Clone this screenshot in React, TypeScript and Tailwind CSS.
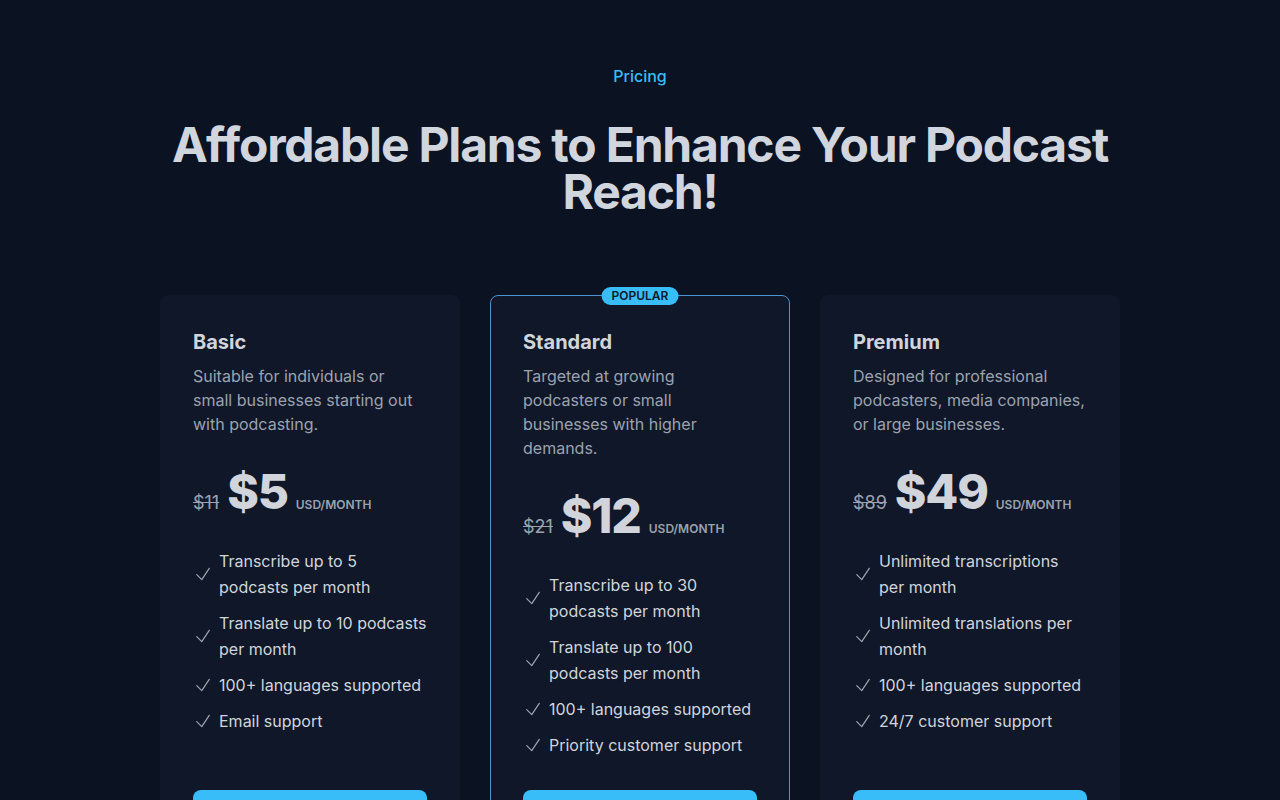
import React from "react";

interface Plan {
  name: string;
  description: string;
  oldPrice: string;
  price: string;
  features: string[];
  popular?: boolean;
}

const plans: Plan[] = [
  {
    name: "Basic",
    description:
      "Suitable for individuals or small businesses starting out with podcasting.",
    oldPrice: "$11",
    price: "$5",
    features: [
      "Transcribe up to 5 podcasts per month",
      "Translate up to 10 podcasts per month",
      "100+ languages supported",
      "Email support",
    ],
  },
  {
    name: "Standard",
    description:
      "Targeted at growing podcasters or small businesses with higher demands.",
    oldPrice: "$21",
    price: "$12",
    features: [
      "Transcribe up to 30 podcasts per month",
      "Translate up to 100 podcasts per month",
      "100+ languages supported",
      "Priority customer support",
    ],
    popular: true,
  },
  {
    name: "Premium",
    description:
      "Designed for professional podcasters, media companies, or large businesses.",
    oldPrice: "$89",
    price: "$49",
    features: [
      "Unlimited transcriptions per month",
      "Unlimited translations per month",
      "100+ languages supported",
      "24/7 customer support",
    ],
  },
];

function CheckIcon() {
  return (
    <svg
      viewBox="0 0 24 24"
      fill="none"
      stroke="currentColor"
      strokeWidth={1.5}
      className="h-5 w-5 shrink-0 text-[#9ca3af]"
    >
      <path strokeLinecap="round" strokeLinejoin="round" d="m4.5 12.75 6 6 9-13.5" />
    </svg>
  );
}

function PlanCard({ plan }: { plan: Plan }) {
  return (
    <div
      className={
        plan.popular
          ? "relative flex flex-col rounded-lg border border-[#4a95d2] bg-[#0f1729] p-8"
          : "relative flex flex-col rounded-lg border border-transparent bg-[#0f1729] p-8"
      }
    >
      {plan.popular && (
        <span className="absolute left-1/2 top-0 -translate-x-1/2 -translate-y-1/2 rounded-full bg-[#38bdf8] px-2.5 py-[1px] text-xs font-semibold text-[#0f172a]">
          POPULAR
        </span>
      )}
      <h3 className="text-xl font-bold text-[#d1d5db]">{plan.name}</h3>
      <p className="mt-2 text-base leading-6 text-[#9ca3af]">
        {plan.description}
      </p>
      <div className="mt-8 flex items-baseline gap-2">
        <span className="text-lg text-[#9ca3af] line-through">
          {plan.oldPrice}
        </span>
        <span className="text-5xl font-extrabold tracking-tight text-[#d1d5db]">
          {plan.price}
        </span>
        <span className="text-xs font-semibold text-[#9ca3af]">USD/MONTH</span>
      </div>
      <ul className="mt-[31px] flex flex-1 flex-col gap-2.5">
        {plan.features.map((f) => (
          <li key={f} className="flex items-center gap-1.5">
            <CheckIcon />
            <span className="text-base leading-[26px] text-[#d1d5db]">{f}</span>
          </li>
        ))}
      </ul>
      <button className="mt-8 h-12 w-full rounded-lg bg-[#38bdf8] text-base font-semibold text-[#0f172a]">
        Get started
      </button>
    </div>
  );
}

export default function App() {
  return (
    <div
      className="min-h-screen bg-[#0b1221] pt-16 pb-24"
      style={{ fontFamily: "Inter, 'Noto Sans', sans-serif" }}
    >
      <div className="mx-auto max-w-[960px]">
        <p className="text-center text-base font-medium text-[#38bdf8]">Pricing</p>
        <h2 className="mx-auto mt-[33px] text-center text-5xl leading-[47px] font-bold tracking-tight text-[#d0d5de]">
          Affordable Plans to Enhance Your Podcast Reach!
        </h2>
        <div className="mt-20 grid grid-cols-3 gap-[30px]">
          {plans.map((p) => (
            <PlanCard key={p.name} plan={p} />
          ))}
        </div>
      </div>
    </div>
  );
}
